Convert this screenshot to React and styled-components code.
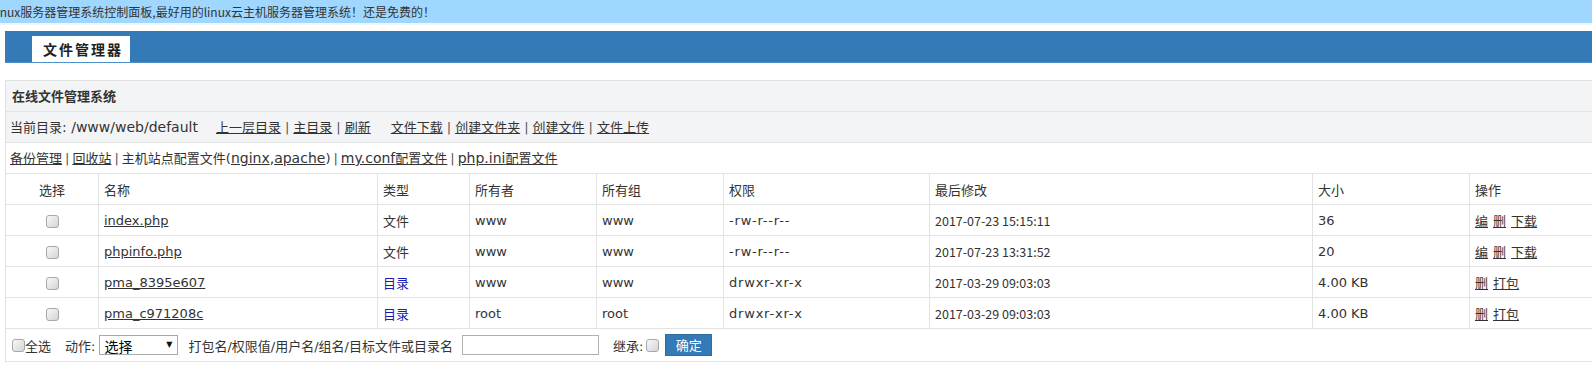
import React from "react";
import styled, { createGlobalStyle } from "styled-components";

const GlobalStyle = createGlobalStyle`
  html, body {
    margin: 0;
    padding: 0;
    background: #fff;
    overflow: hidden;
  }
  body {
    font-family: "DejaVu Sans", "Noto Sans CJK SC", sans-serif;
    font-size: 13px;
    color: #333;
  }
`;

const Notice = styled.div`
  height: 23px;
  background: #a0d7ff;
  font-family: "Noto Sans CJK SC", sans-serif;
  font-size: 12px;
  line-height: 23px;
  white-space: nowrap;
  overflow: hidden;
  color: #333;
`;

const NoticeText = styled.span`
  display: inline-block;
  margin-left: -7px;
`;

const Page = styled.div`
  width: 1600px;
  padding: 6px 0 0 5px;
  border-top: 2px solid #f4f4f4;
`;

const TabBar = styled.div`
  height: 31px;
  background: #337ab7;
  border-bottom: 1px solid #4d8fc8;
  display: flex;
  align-items: flex-end;
  padding-left: 27px;
`;

const Tab = styled.div`
  height: 26px;
  line-height: 26px;
  background: #fff;
  padding: 0 7px 0 11px;
  font-family: "Noto Sans CJK SC", sans-serif;
  font-size: 14px;
  font-weight: bold;
  letter-spacing: 2px;
  color: #222;
`;

const Panel = styled.div`
  margin-top: 17px;
  border-top: 1px solid #e0e0e0;
  border-left: 1px solid #e0e0e0;
`;

const PanelHead = styled.div`
  height: 30px;
  line-height: 30px;
  background: #f3f4f6;
  border-bottom: 1px solid #e3e3e3;
  padding-left: 6px;
  font-family: "Noto Sans CJK SC", sans-serif;
  font-weight: bold;
  font-size: 13px;
  color: #333;
`;

const NavRow = styled.div`
  height: 30px;
  line-height: 30px;
  background: ${p => p.bg || "#fff"};
  border-bottom: 1px solid #e3e3e3;
  padding-left: 4px;
  white-space: nowrap;
`;

const Latin = styled.span`
  font-size: 14px;
`;

const Group = styled.span`
  margin-left: ${p => p.gap || 0}px;
`;

const Link = styled.a`
  color: #333;
  text-decoration: underline;
  cursor: pointer;
`;

const Sep = styled.span`
  color: #555;
  padding: 0 ${p => p.pad ?? 4}px;
`;

const Table = styled.table`
  width: 100%;
  border-collapse: separate;
  border-spacing: 0;
  table-layout: fixed;
`;

const Cell = styled.td`
  height: 30px;
  padding: 0 0 0 5px;
  border-bottom: 1px solid #e3e3e3;
  border-left: 1px solid #e3e3e3;
  text-align: ${p => (p.center ? "center" : "left")};
  white-space: nowrap;
  color: ${p => p.color || "#333"};
  &:first-child {
    border-left: none;
    padding: 0;
  }
`;

const HeadCell = styled(Cell).attrs({ as: "th" })`
  font-weight: normal;
`;

const PermCell = styled(Cell)`
  letter-spacing: 0.8px;
`;

const TimeCell = styled(Cell)`
  font-family: "Noto Sans CJK SC", sans-serif;
  font-size: 12.5px;
`;

const Check = styled.input.attrs({ type: "checkbox" })`
  appearance: none;
  width: 13px;
  height: 13px;
  margin: 0;
  border: 1px solid #a8a8a8;
  border-radius: 3px;
  background: linear-gradient(135deg, #f8f8f8, #d4d4d4);
  vertical-align: middle;
  box-sizing: border-box;
`;

const Ops = styled.span`
  display: inline-flex;
  gap: 5px;
`;

const Footer = styled.div`
  height: 32px;
  border-bottom: 1px solid #e3e3e3;
  display: flex;
  align-items: center;
  padding-left: 6px;
  white-space: nowrap;
`;

const Label = styled.span`
  margin-left: ${p => p.gap || 0}px;
  margin-right: ${p => p.right || 0}px;
`;

const SelectWrap = styled.span`
  position: relative;
  display: inline-block;
  height: 20px;
`;

const Select = styled.select`
  appearance: none;
  width: 79px;
  height: 20px;
  border: 1px solid #a9a9a9;
  border-radius: 0;
  background: #fff;
  font-family: "Noto Sans CJK SC", sans-serif;
  font-size: 14px;
  color: #000;
  padding: 0 0 0 4px;
  margin: 0;
  outline: none;
`;

const Arrow = styled.span`
  position: absolute;
  right: 6px;
  top: 5px;
  font-size: 8px;
  line-height: 10px;
  color: #111;
  pointer-events: none;
`;

const TextInput = styled.input`
  width: 137px;
  height: 20px;
  box-sizing: border-box;
  border: 1px solid #b0b0b0;
  margin: 0 0 0 9px;
  padding: 0 3px;
`;

const Button = styled.button`
  width: 47px;
  height: 22px;
  margin-left: 6px;
  padding: 0;
  background: #337ab7;
  border: 1px solid #2e6da4;
  color: #fff;
  font-family: "Noto Sans CJK SC", sans-serif;
  font-size: 13px;
  line-height: 20px;
`;

const columns = [
  { title: "选择", width: 92, center: true },
  { title: "名称", width: 279 },
  { title: "类型", width: 92 },
  { title: "所有者", width: 127 },
  { title: "所有组", width: 127 },
  { title: "权限", width: 206 },
  { title: "最后修改", width: 383 },
  { title: "大小", width: 157 },
  { title: "操作" },
];

const files = [
  { name: "index.php", type: "文件", owner: "www", group: "www", perm: "-rw-r--r--", time: "2017-07-23 15:15:11", size: "36", ops: ["编", "删", "下载"] },
  { name: "phpinfo.php", type: "文件", owner: "www", group: "www", perm: "-rw-r--r--", time: "2017-07-23 13:31:52", size: "20", ops: ["编", "删", "下载"] },
  { name: "pma_8395e607", type: "目录", owner: "www", group: "www", perm: "drwxr-xr-x", time: "2017-03-29 09:03:03", size: "4.00 KB", ops: ["删", "打包"], dir: true },
  { name: "pma_c971208c", type: "目录", owner: "root", group: "root", perm: "drwxr-xr-x", time: "2017-03-29 09:03:03", size: "4.00 KB", ops: ["删", "打包"], dir: true },
];

const LinkList = ({ items }) =>
  items.map((t, i) => (
    <React.Fragment key={t}>
      {i > 0 && <Sep>|</Sep>}
      <Link>{t}</Link>
    </React.Fragment>
  ));

export default function App() {
  return (
    <>
      <GlobalStyle />
      <Notice>
        <NoticeText>linux服务器管理系统控制面板,最好用的linux云主机服务器管理系统！还是免费的！</NoticeText>
      </Notice>
      <Page>
        <TabBar>
          <Tab>文件管理器</Tab>
        </TabBar>
        <Panel>
          <PanelHead>在线文件管理系统</PanelHead>
          <NavRow bg="#f3f4f6">
            当前目录<Latin>: /www/web/default</Latin>
            <Group gap={18}>
              <LinkList items={["上一层目录", "主目录", "刷新"]} />
            </Group>
            <Group gap={20}>
              <LinkList items={["文件下载", "创建文件夹", "创建文件", "文件上传"]} />
            </Group>
          </NavRow>
          <NavRow>
            <Link>备份管理</Link>
            <Sep pad={3}>|</Sep>
            <Link>回收站</Link>
            <Sep pad={3}>|</Sep>
            主机站点配置文件(<Link><Latin>nginx</Latin></Link><Latin>,</Latin><Link><Latin>apache</Latin></Link>)
            <Sep pad={3}>|</Sep>
            <Link><Latin>my.conf</Latin>配置文件</Link>
            <Sep pad={3}>|</Sep>
            <Link><Latin>php.ini</Latin>配置文件</Link>
          </NavRow>
          <Table>
            <colgroup>
              {columns.map(c => (
                <col key={c.title} style={c.width ? { width: c.width } : undefined} />
              ))}
            </colgroup>
            <thead>
              <tr>
                {columns.map(c => (
                  <HeadCell key={c.title} center={c.center}>{c.title}</HeadCell>
                ))}
              </tr>
            </thead>
            <tbody>
              {files.map(f => (
                <tr key={f.name}>
                  <Cell center><Check /></Cell>
                  <Cell><Link>{f.name}</Link></Cell>
                  <Cell color={f.dir ? "#1c1cb4" : undefined}>{f.type}</Cell>
                  <Cell>{f.owner}</Cell>
                  <Cell>{f.group}</Cell>
                  <PermCell>{f.perm}</PermCell>
                  <TimeCell>{f.time}</TimeCell>
                  <Cell>{f.size}</Cell>
                  <Cell>
                    <Ops>
                      {f.ops.map(o => <Link key={o}>{o}</Link>)}
                    </Ops>
                  </Cell>
                </tr>
              ))}
            </tbody>
          </Table>
          <Footer>
            <Check />
            <Label>全选</Label>
            <Label gap={14} right={4}>动作:</Label>
            <SelectWrap>
              <Select defaultValue="">
                <option value="">选择</option>
                <option value="zip">打包</option>
                <option value="chmod">权限</option>
              </Select>
              <Arrow>▼</Arrow>
            </SelectWrap>
            <Label gap={10}>打包名/权限值/用户名/组名/目标文件或目录名</Label>
            <TextInput />
            <Label gap={14} right={3}>继承:</Label>
            <Check />
            <Button>确定</Button>
          </Footer>
        </Panel>
      </Page>
    </>
  );
}
